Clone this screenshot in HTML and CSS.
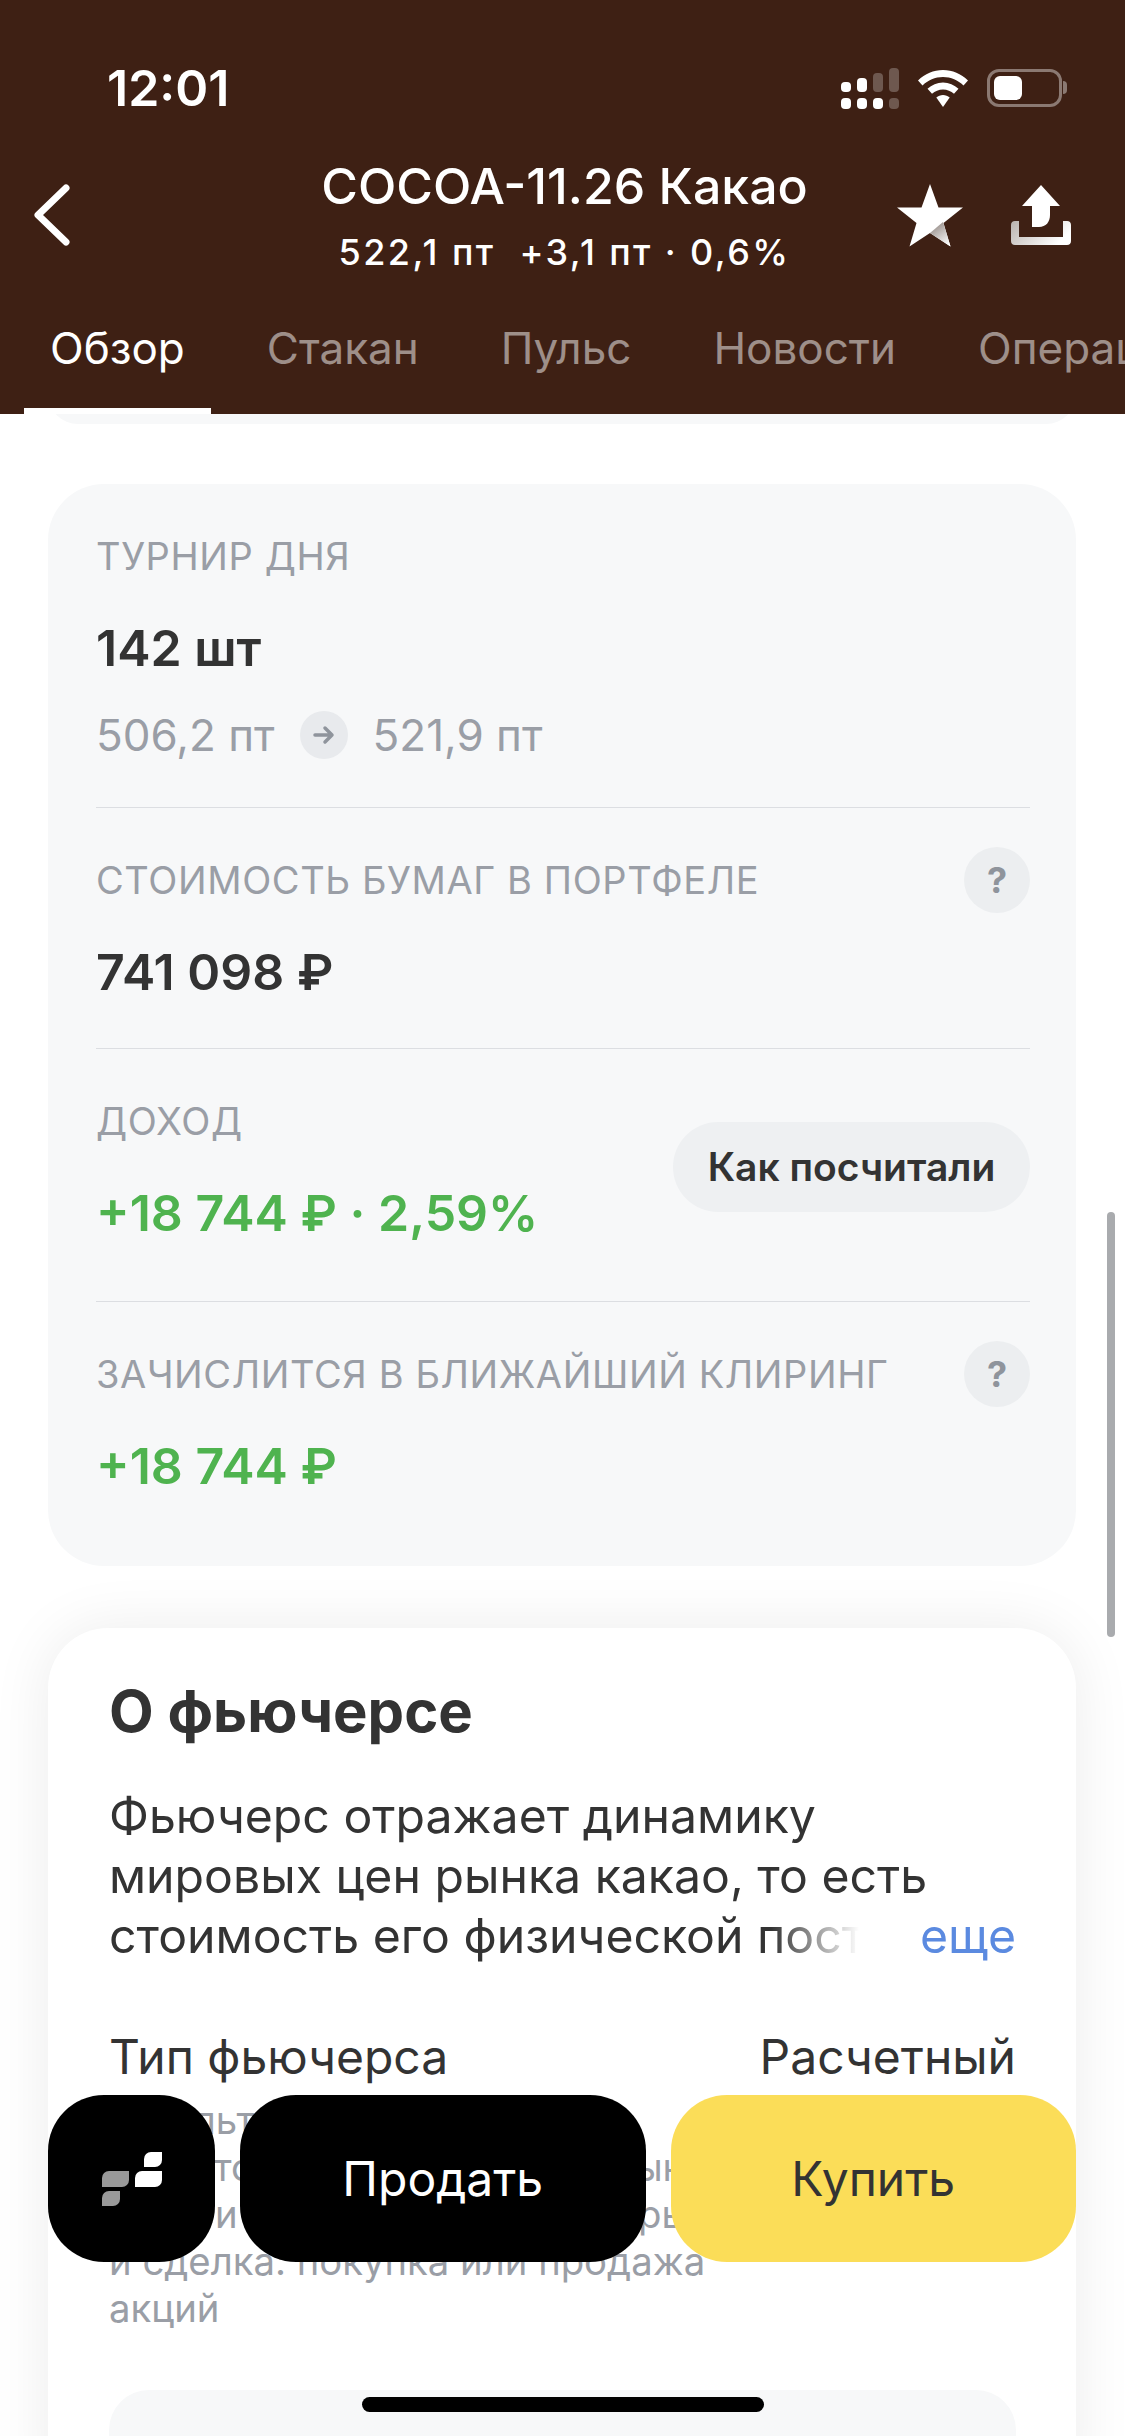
FILE: index.html
```html
<!DOCTYPE html>
<html lang="ru">
<head>
    <meta charset="UTF-8">
    <meta name="viewport" content="width=device-width, initial-scale=1.0">
    <title>COCOA-11.26 Какао</title>
    <link rel="stylesheet" href="styles.css">
</head>
<body>

    <header class="header">
        <!-- Status bar -->
        <div class="status-bar">
            <span class="time">12:01</span>
            <div class="status-icons">
                <svg class="signal" width="58" height="41" viewBox="0 0 58 41" fill="#fff">
                    <rect x="0" y="14" width="10" height="10" rx="4"/>
                    <rect x="16" y="10" width="10" height="14" rx="4"/>
                    <rect x="32" y="5" width="10" height="19" rx="4" opacity=".25"/>
                    <rect x="48" y="0" width="10" height="24" rx="4" opacity=".25"/>
                    <rect x="0" y="30" width="10" height="11" rx="4"/>
                    <rect x="16" y="30" width="10" height="11" rx="4"/>
                    <rect x="32" y="30" width="10" height="11" rx="4"/>
                    <rect x="48" y="30" width="10" height="11" rx="4" opacity=".25"/>
                </svg>
                <svg class="wifi" width="50" height="37" viewBox="0 0 50 37" fill="#fff">
                    <path d="M25 0C15.500 0 7 3.800 0 10.500L4.500 15.500C10 10.200 17 7 25 7S40 10.200 45.500 15.500L50 10.500C43 3.800 34.500 0 25 0Z"/>
                    <path d="M25 12.500C19 12.500 13.800 14.800 9.500 18.800L14 23.800C17 21.200 20.800 19.500 25 19.500S33 21.200 36 23.800L40.500 18.800C36.200 14.800 31 12.500 25 12.500Z"/>
                    <path d="M25 25C22.500 25 20.200 26 18.300 27.500L25 37L31.700 27.500C29.800 26 27.500 25 25 25Z"/>
                </svg>
                <div class="battery">
                    <div class="battery-level"></div>
                </div>
            </div>
        </div>

        <!-- Title and actions -->
        <div class="nav-bar">
            <svg class="back" width="38" height="62" viewBox="0 0 38 62" fill="none" stroke="#fff" stroke-width="7" stroke-linecap="round" stroke-linejoin="round">
                <path d="M33 4L5 31L33 58"/>
            </svg>
            <div class="nav-title">
                <div class="ticker">COCOA-11.26 Какао</div>
                <div class="quote">522,1 пт&nbsp; +3,1 пт · 0,6%</div>
            </div>
            <div class="nav-actions">
                <svg width="66" height="63" viewBox="0 0 66 63">
                    <defs>
                        <linearGradient id="starShade" x1="0.2" y1="0" x2="0.8" y2="1">
                            <stop offset="0" stop-color="#8f8580"/>
                            <stop offset="1" stop-color="#fff"/>
                        </linearGradient>
                        <linearGradient id="trayShade" x1="0" y1="0" x2="1" y2="0.4">
                            <stop offset="0" stop-color="#b9b2ae"/>
                            <stop offset="1" stop-color="#fff"/>
                        </linearGradient>
                    </defs>
                    <path fill="#fff" d="M33 0L41.500 23.500H66L46.500 39L53.500 62.500L33 49L12.500 62.500L19.500 39L0 23.500H24.500Z"/>
                    <path fill="url(#starShade)" d="M46 38L53.500 62.500L33 49Z"/>
                </svg>
                <svg width="60" height="60" viewBox="0 0 60 60">
                    <path fill="#fff" d="M30 0L49 21H39V30C39 37 35 42 28 42H21V21H11Z"/>
                    <path fill="url(#trayShade)" d="M0 40C0 37.500 1.500 36 4 36H8V52H52V36H56C58.500 36 60 37.500 60 40V56C60 58.500 58.500 60 56 60H4C1.500 60 0 58.500 0 56Z"/>
                </svg>
            </div>
        </div>

        <!-- Tabs -->
        <nav class="tabs">
            <div class="tab active">Обзор</div>
            <div class="tab">Стакан</div>
            <div class="tab">Пульс</div>
            <div class="tab">Новости</div>
            <div class="tab">Операции</div>
        </nav>
    </header>

    <main class="content">
        <div class="prev-card"></div>

        <section class="stats-card">
            <div class="stat-row">
                <div class="label">ТУРНИР ДНЯ</div>
                <div class="value">142 шт</div>
                <div class="prices">
                    <span>506,2 пт</span>
                    <span class="arrow">
                        <svg width="24" height="20" viewBox="0 0 24 20" fill="none" stroke="#8f949c" stroke-width="3.500" stroke-linecap="round" stroke-linejoin="round">
                            <path d="M3 10H20M13 3L20 10L13 17"/>
                        </svg>
                    </span>
                    <span>521,9 пт</span>
                </div>
            </div>

            <div class="stat-row">
                <div class="label-line">
                    <div class="label">СТОИМОСТЬ БУМАГ В ПОРТФЕЛЕ</div>
                    <div class="help">?</div>
                </div>
                <div class="value">741 098 ₽</div>
            </div>

            <div class="stat-row stat-row-split">
                <div>
                    <div class="label">ДОХОД</div>
                    <div class="value green">+18 744 ₽ · 2,59%</div>
                </div>
                <button class="how-btn">Как посчитали</button>
            </div>

            <div class="stat-row">
                <div class="label-line">
                    <div class="label">ЗАЧИСЛИТСЯ В БЛИЖАЙШИЙ КЛИРИНГ</div>
                    <div class="help">?</div>
                </div>
                <div class="value green">+18 744 ₽</div>
            </div>
        </section>

        <section class="about-card">
            <h2>О фьючерсе</h2>
            <div class="about-text">
                Фьючерс отражает динамику<br>
                мировых цен рынка какао, то есть<br>
                стоимость его физической поставки
                <span class="more">еще</span>
            </div>
            <div class="spec-row">
                <span>Тип фьючерса</span>
                <span>Расчетный</span>
            </div>
            <p class="spec-note">
                Результат определяется<br>
                Цена товаров на мировых рынках<br>
                Срок и размеры контракта, рынка<br>
                и сделка: покупка или продажа<br>
                акций
            </p>
            <div class="inner-card"></div>
        </section>
    </main>

    <!-- Floating buttons -->
    <div class="actions">
        <button class="action action-logo">
            <svg width="60" height="54" viewBox="0 0 60 54">
                <path fill="#999" d="M7 19H27V28a7 7 0 0 1-7 7H0V26a7 7 0 0 1 7-7Z"/>
                <path fill="#999" d="M7 39H18V47a7 7 0 0 1-7 7H0V46a7 7 0 0 1 7-7Z"/>
                <path fill="#fff" d="M49 0H60V8a7 7 0 0 1-7 7H42V7a7 7 0 0 1 7-7Z"/>
                <path fill="#fff" d="M40 19H60V28a7 7 0 0 1-7 7H33V26a7 7 0 0 1 7-7Z"/>
            </svg>
        </button>
        <button class="action action-sell">Продать</button>
        <button class="action action-buy">Купить</button>
    </div>

    <div class="scrollbar"></div>
    <div class="home-indicator"></div>

</body>
</html>
```

FILE: styles.css
```css
* {
    box-sizing: border-box;
}

body {
    margin: 0;
    height: 100vh;
    position: relative;
    overflow: hidden;
    background: white;
    color: #333333;
    font-family: Inter, "Noto Sans", sans-serif;
}

/* Header */
.header {
    position: relative;
    z-index: 1;
    height: 414px;
    background: #3e2014;
    color: white;
    overflow: hidden;
}

.status-bar {
    height: 135px;
    padding: 41px 63px 0 107px;
    display: flex;
    justify-content: space-between;
    align-items: center;
}

.time {
    font-size: 50px;
    font-weight: 600;
}

.status-icons {
    display: flex;
    align-items: center;
    gap: 19px;
}

.battery {
    position: relative;
    width: 75px;
    height: 38px;
    padding: 4px;
    border: 3px solid rgba(255, 255, 255, 0.4);
    border-radius: 12px;
}

.battery::after {
    content: "";
    position: absolute;
    right: -8px;
    top: 9px;
    width: 4px;
    height: 13px;
    background: rgba(255, 255, 255, 0.4);
    border-radius: 0 4px 4px 0;
}

.battery-level {
    width: 28px;
    height: 100%;
    background: white;
    border-radius: 6px;
}

.nav-bar {
    height: 160px;
    padding: 0 54px 0 58px;
    display: grid;
    grid-template-columns: 1fr auto 1fr;
    align-items: center;
}

.back {
    margin-left: -25px;
}

.nav-title {
    text-align: center;
}

.ticker {
    font-size: 50px;
    font-weight: 500;
    line-height: 60px;
}

.quote {
    font-size: 36px;
    font-weight: 500;
    letter-spacing: 2.400px;
    line-height: 44px;
    margin-top: 14px;
}

.nav-actions {
    display: flex;
    align-items: center;
    justify-content: flex-end;
    gap: 48px;
}

.tabs {
    display: flex;
    gap: 30px;
    padding-left: 24px;
    white-space: nowrap;
}

.tab {
    height: 119px;
    padding: 0 26px;
    font-size: 44px;
    line-height: 106px;
    color: rgba(255, 255, 255, 0.5);
}

.tab.active {
    color: white;
    border-bottom: 6px solid white;
}

/* Content */
.content {
    padding: 0 49px 0 48px;
}

.prev-card {
    height: 60px;
    margin-top: -50px;
    background: #f7f8f9;
    border-radius: 50px;
}

.stats-card {
    margin-top: 60px;
    padding: 0 46px 24px 48px;
    background: #f7f8f9;
    border-radius: 56px;
}

.stat-row {
    padding: 48px 0;
    border-bottom: 1px solid #dcdee2;
}

.stat-row:last-child {
    border-bottom: none;
}

.stat-row-split {
    padding-bottom: 60px;
    display: flex;
    justify-content: space-between;
    align-items: center;
}

.label {
    font-size: 38px;
    letter-spacing: 0.600px;
    line-height: 48px;
    color: #9a9ea6;
}

.label-line {
    display: flex;
    justify-content: space-between;
    align-items: center;
    height: 48px;
}

.help {
    width: 66px;
    height: 66px;
    flex-shrink: 0;
    border-radius: 50%;
    background: #eceef0;
    color: #8f949c;
    font-size: 36px;
    font-weight: 700;
    line-height: 66px;
    text-align: center;
}

.value {
    margin-top: 40px;
    font-size: 50px;
    font-weight: 600;
    line-height: 56px;
}

.green {
    color: #4fb34f;
}

.prices {
    margin-top: 35px;
    display: flex;
    align-items: center;
    gap: 25px;
    font-size: 44px;
    line-height: 48px;
    color: #9a9ea6;
}

.arrow {
    width: 48px;
    height: 48px;
    border-radius: 50%;
    background: #e8eaed;
    display: flex;
    align-items: center;
    justify-content: center;
}

.how-btn {
    width: 357px;
    height: 90px;
    margin-bottom: 5px;
    padding: 0;
    border: none;
    border-radius: 45px;
    background: #eef0f2;
    color: #333333;
    font-family: inherit;
    font-size: 39px;
    font-weight: 600;
}

.about-card {
    margin-top: 62px;
    padding: 53px 60px 0 61px;
    height: 900px;
    background: white;
    border-radius: 60px;
    box-shadow: 0 0 60px rgba(0, 0, 0, 0.08);
}

.about-card h2 {
    margin: 0;
    font-size: 58px;
    font-weight: 700;
    line-height: 60px;
}

.about-text {
    position: relative;
    margin-top: 45px;
    height: 180px;
    overflow: hidden;
    font-size: 48.200px;
    line-height: 60px;
    white-space: nowrap;
}

.more {
    position: absolute;
    right: 0;
    bottom: 0;
    padding-left: 149px;
    color: #5b8ae0;
    background: linear-gradient(90deg, rgba(255, 255, 255, 0), white 88px);
}

.spec-row {
    margin-top: 61px;
    display: flex;
    justify-content: space-between;
    font-size: 48px;
    line-height: 60px;
}

.spec-note {
    margin: 10px 0 0;
    font-size: 38.300px;
    line-height: 47px;
    color: #9a9ea6;
    white-space: nowrap;
}

.inner-card {
    margin-top: 58px;
    height: 200px;
    background: #f7f8f9;
    border-radius: 40px;
}

/* Floating buttons */
.actions {
    position: absolute;
    left: 48px;
    right: 49px;
    bottom: 174px;
    display: flex;
    gap: 25px;
}

.action {
    height: 167px;
    padding: 0;
    border: none;
    border-radius: 56px;
    font-family: inherit;
    font-size: 48px;
    display: flex;
    align-items: center;
    justify-content: center;
}

.action-logo {
    width: 167px;
    background: black;
}

.action-sell {
    flex: 1;
    background: black;
    color: white;
}

.action-buy {
    flex: 1;
    background: #fbdd58;
    color: #333333;
}

.scrollbar {
    position: absolute;
    right: 10px;
    top: 1212px;
    width: 8px;
    height: 425px;
    border-radius: 4px;
    background: #a9abae;
}

.home-indicator {
    position: absolute;
    left: 362px;
    bottom: 24px;
    width: 402px;
    height: 15px;
    border-radius: 8px;
    background: black;
}
```
